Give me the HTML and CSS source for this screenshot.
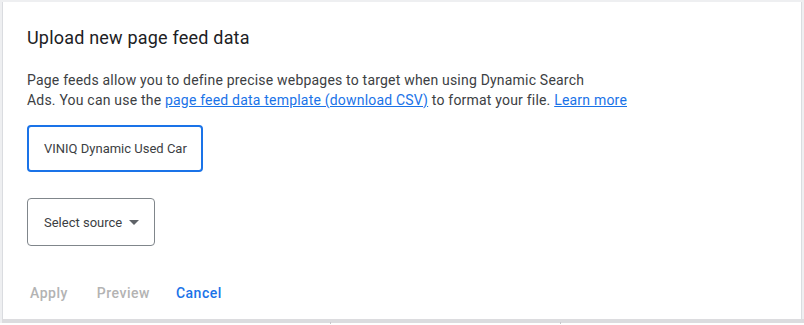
FILE: index.html
```html
<!DOCTYPE html>
<html>
<head>
<meta charset="utf-8">
<link rel="stylesheet" href="styles.css">
</head>
<body>
<div class="frame">
  <div class="dialog">
    <h1 class="title">Upload new page feed data</h1>
    <p class="desc">Page feeds allow you to define precise webpages to target when using Dynamic Search<br>Ads. You can use the <a class="link" href="#">page feed data template (download CSV)</a> to format your file. <a class="link" href="#">Learn more</a></p>
    <div class="field"><span class="field-text">VINIQ Dynamic Used Car</span></div>
    <div class="select"><span>Select source</span><span class="arrow"></span></div>
    <div class="actions">
      <span class="btn disabled btn-apply">Apply</span>
      <span class="btn disabled btn-preview">Preview</span>
      <span class="btn primary">Cancel</span>
    </div>
  </div>
  <div class="under">
    <span class="tick tick1"></span>
    <span class="tick tick2"></span>
  </div>
</div>
</body>
</html>
```
FILE: styles.css
```css
html, body {
  margin: 0;
  padding: 0;
  background: #ffffff;
}
body {
  width: 804px;
  height: 325px;
  overflow: hidden;
  font-family: Roboto, "Liberation Sans", Arial, sans-serif;
  color: #3c4043;
}
.frame {
  background: #eeeff1;
  padding: 2px 2px 0 2px;
  height: 323px;
  box-sizing: border-box;
  display: flex;
  flex-direction: column;
}
.dialog {
  background: #ffffff;
  border-left: 1px solid #dadce0;
  border-right: 1px solid #dadce0;
  height: 319px;
  box-sizing: border-box;
  padding: 0 24px;
  display: flex;
  flex-direction: column;
}
.title {
  margin: 24px 0 0 0;
  font-size: 18px;
  font-weight: 400;
  line-height: 24px;
  letter-spacing: 0.2px;
  color: #202124;
}
.desc {
  margin: 20px 0 0 0;
  font-size: 14px;
  line-height: 20px;
  letter-spacing: 0.2px;
  color: #3c4043;
}
.link {
  color: #1a73e8;
  text-decoration: underline;
}
.field {
  margin-top: 15px;
  width: 176px;
  height: 47px;
  box-sizing: border-box;
  border: 2px solid #1a73e8;
  border-radius: 4px;
  padding: 0 0 0 15px;
  display: flex;
  align-items: center;
  font-size: 13px;
  color: #3c4043;
  white-space: nowrap;
  overflow: hidden;
}
.select {
  margin-top: 26px;
  width: 128px;
  height: 48px;
  box-sizing: border-box;
  border: 1px solid #80868b;
  border-radius: 4px;
  padding: 0 0 0 16px;
  display: flex;
  align-items: center;
  font-size: 13px;
  color: #3c4043;
  gap: 7px;
}
.arrow {
  width: 0;
  height: 0;
  border-left: 5px solid transparent;
  border-right: 5px solid transparent;
  border-top: 5px solid #5f6368;
}
.actions {
  margin-top: 37px;
  display: flex;
  align-items: center;
  font-size: 14px;
  font-weight: 500;
  line-height: 20px;
  letter-spacing: 0.5px;
}
.btn {
  display: inline-block;
}
.btn-apply {
  margin-left: 3px;
  margin-right: 29px;
}
.btn-preview {
  margin-right: 26px;
}
.disabled {
  color: #b3b3b3;
}
.primary {
  color: #1a73e8;
}
.under {
  height: 4px;
  background: #dcdcdf;
  margin: 0 -2px 0 0;
  position: relative;
}
.tick {
  position: absolute;
  top: 3px;
  width: 1px;
  height: 2px;
  background: #c8c8cc;
}
.tick1 { left: 328px; }
.tick2 { left: 558px; }
```
